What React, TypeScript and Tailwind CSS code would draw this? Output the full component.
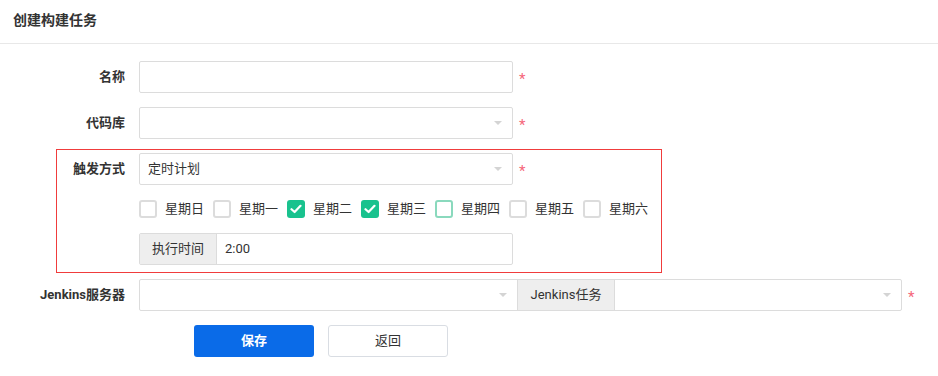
import { useState } from 'react'

const days = ['星期日', '星期一', '星期二', '星期三', '星期四', '星期五', '星期六']

function Star() {
  return <span className="ml-[6px] mt-[4px] text-[15px] leading-none text-[#f5657a]">*</span>
}

function Arrow() {
  return (
    <span className="absolute right-[10px] top-1/2 -translate-y-1/2 border-x-[4px] border-t-[4px] border-x-transparent border-t-[#d4d4d4]" />
  )
}

function Label({ text, width }: { text: string; width: string }) {
  return (
    <div className={`${width} shrink-0 pr-[14px] text-right text-[13px] font-bold text-[#333]`}>{text}</div>
  )
}

function Checkbox({ label, checked, hover, onClick }: { label: string; checked: boolean; hover?: boolean; onClick: () => void }) {
  return (
    <label className="mr-[9px] flex cursor-pointer items-center" onClick={onClick}>
      <span
        className={
          checked
            ? 'flex h-[18px] w-[18px] items-center justify-center rounded-[3px] bg-[#19c28e]'
            : hover
              ? 'h-[18px] w-[18px] rounded-[3px] border-2 border-[#8ad9bd]'
              : 'h-[18px] w-[18px] rounded-[3px] border-2 border-[#dcdcdc]'
        }
      >
        {checked && (
          <svg width="12" height="10" viewBox="0 0 12 10">
            <path d="M1.5 5.2 L4.6 8 L10.5 1.8" fill="none" stroke="#fff" strokeWidth="2.2" strokeLinecap="round" strokeLinejoin="round" />
          </svg>
        )}
      </span>
      <span className="ml-[8px] text-[13px] text-[#333]">{label}</span>
    </label>
  )
}

export default function App() {
  const [checked, setChecked] = useState<boolean[]>([false, false, true, true, false, false, false])

  const toggle = (i: number) => {
    setChecked((c) => c.map((v, idx) => (idx === i ? !v : v)))
  }

  return (
    <div className="h-[376px] w-[938px] bg-white font-['Roboto','Noto_Sans_CJK_SC',sans-serif] text-[#333]">
      {/* 标题 */}
      <div className="flex h-[44px] items-center border-b border-[#e8e8e8] pb-[2px] pl-[13px] text-[14px] font-bold text-[#333]">
        创建构建任务
      </div>

      <div className="pt-[17px]">
        {/* 名称 */}
        <div className="flex items-center">
          <Label text="名称" width="w-[139px]" />
          <input className="h-[32px] w-[374px] rounded-[2px] border border-[#dcdcdc] px-[8px] text-[13px] outline-none" />
          <Star />
        </div>

        {/* 代码库 */}
        <div className="mt-[14px] flex items-center">
          <Label text="代码库" width="w-[139px]" />
          <div className="relative h-[32px] w-[374px] rounded-[2px] border border-[#dcdcdc]">
            <Arrow />
          </div>
          <Star />
        </div>

        {/* 触发方式 */}
        <div className="ml-[56px] mt-[10px] w-[606px] border border-[#f03c3c] pb-[7px] pt-[3px]">
          <div className="flex items-center">
            <Label text="触发方式" width="w-[82px]" />
            <div className="relative flex h-[32px] w-[374px] items-center rounded-[2px] border border-[#dcdcdc] px-[8px] text-[13px]">
              定时计划
              <Arrow />
            </div>
            <Star />
          </div>
          <div className="flex h-[48px] items-center pl-[82px]">
            {days.map((d, i) => (
              <Checkbox key={d} label={d} checked={checked[i]} hover={i === 4} onClick={() => toggle(i)} />
            ))}
          </div>
          <div className="ml-[82px] flex h-[32px] w-[374px] rounded-[2px] border border-[#dcdcdc] text-[13px]">
            <div className="flex w-[77px] items-center justify-center border-r border-[#dcdcdc] bg-[#eeeeee]">执行时间</div>
            <div className="flex items-center pl-[8px]">2:00</div>
          </div>
        </div>

        {/* Jenkins */}
        <div className="mt-[6px] flex items-center">
          <Label text="Jenkins服务器" width="w-[139px]" />
          <div className="flex h-[32px] w-[763px] rounded-[2px] border border-[#dcdcdc] text-[13px]">
            <div className="relative w-[377px]">
              <Arrow />
            </div>
            <div className="flex w-[98px] items-center justify-center border-x border-[#dcdcdc] bg-[#eeeeee]">Jenkins任务</div>
            <div className="relative flex-1">
              <Arrow />
            </div>
          </div>
          <Star />
        </div>

        {/* 按钮 */}
        <div className="mt-[14px] flex pl-[194px]">
          <button className="h-[32px] w-[120px] rounded-[3px] bg-[#0a6be8] text-[13px] font-bold text-white">保存</button>
          <button className="ml-[14px] h-[32px] w-[120px] rounded-[3px] border border-[#d9dde3] bg-white text-[13px] text-[#333]">返回</button>
        </div>
      </div>
    </div>
  )
}
